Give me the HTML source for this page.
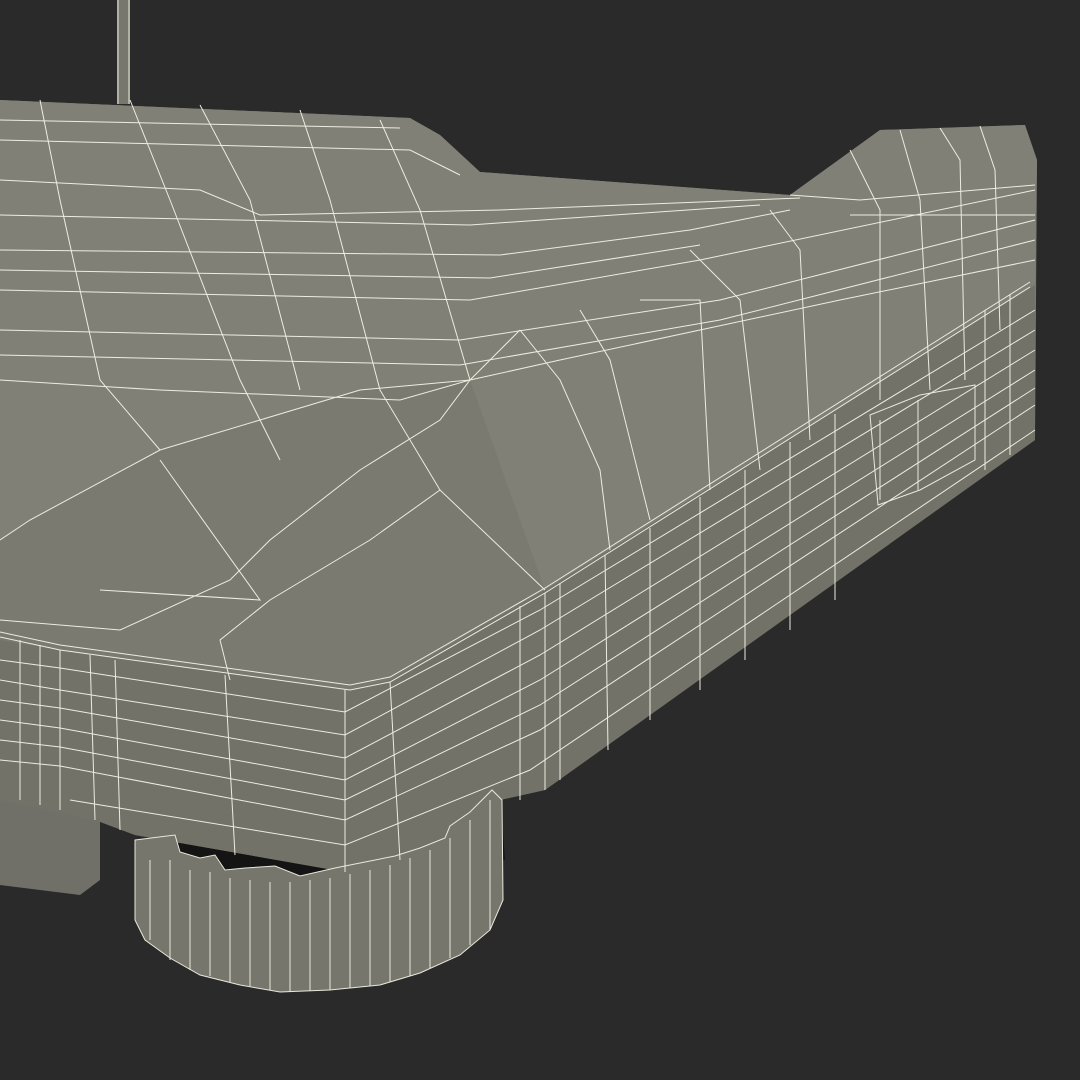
<!DOCTYPE html>
<html><head><meta charset="utf-8"><style>html,body{margin:0;padding:0;background:#2a2a2a;}svg{display:block}</style></head>
<body>
<svg width="1080" height="1080" viewBox="0 0 1080 1080" xmlns="http://www.w3.org/2000/svg">
<rect width="1080" height="1080" fill="#2a2a2a"/>
<rect x="117" y="0" width="13" height="104" fill="#77776d"/>
<line x1="118" y1="0" x2="118" y2="104" stroke="#e8e8dc" stroke-width="1"/>
<line x1="129" y1="0" x2="129" y2="104" stroke="#e8e8dc" stroke-width="1"/>
<polygon points="0,780 100,800 100,880 80,895 0,885" fill="#707068"/>
<polygon points="140,840 500,790 505,860 330,880 150,870" fill="#141414"/>
<polygon points="0,100 410,118 440,135 480,172 790,195 880,130 1025,125 1037,160 1035,440 545,790 500,800 420,855 345,872 135,835 95,820 0,800" fill="#7a7a70"/>
<polygon points="0,100 410,118 440,135 480,172 790,195 880,130 1025,125 1037,160 1035,285 545,590 470,380 360,390 160,450 30,520 0,540" fill="#808076"/>
<polygon points="0,640 60,650 350,690 390,680 545,590 1035,285 1035,440 545,790 500,800 420,855 345,872 135,835 95,820 0,800" fill="#727269"/>
<polygon points="135,840 175,835 180,852 200,858 215,855 225,870 245,868 275,866 300,876 335,868 360,863 395,856 420,848 445,838 450,826 470,812 482,800 492,790 502,800 503,900 490,930 460,955 420,973 380,985 330,990 280,992 240,985 200,975 170,958 145,940 135,920" fill="#76766d" stroke="#e8e8dc" stroke-width="1"/>
<g stroke="#e8e8dc" stroke-width="1" fill="none">
<path d="M150,860 L150,940 M170,860 L170,960 M190,870 L190,970 M210,872 L210,976 M230,878 L230,982 M250,880 L250,986 M270,882 L270,990 M290,882 L290,992 M310,880 L310,991 M330,878 L330,990 M350,874 L350,988 M370,870 L370,986 M390,865 L390,982 M410,858 L410,976 M430,850 L430,968 M450,838 L450,958 M470,820 L470,945 M490,800 L490,930"/>
</g>
<polygon points="870,415 920,395 975,385 975,460 920,490 878,505" fill="#727269" stroke="#e8e8dc" stroke-width="1"/>
<line x1="918" y1="400" x2="918" y2="490" stroke="#e8e8dc"/>
<line x1="880" y1="420" x2="880" y2="500" stroke="#e8e8dc"/>
<g stroke="#ecece0" stroke-width="1" fill="none">
<path d="M0,632 L60,645 L350,685 L390,677 L545,588 L1030,282"/>
<path d="M0,637 L60,650 L350,690 L390,682 L545,593 L1030,287"/>
<path d="M0,660 L60,668 L345,712 L540,610 L1035,310"/>
<path d="M0,680 L60,690 L345,735 L540,630 L1035,330"/>
<path d="M0,700 L60,708 L345,758 L540,655 L1035,350"/>
<path d="M0,720 L60,728 L345,780 L540,680 L1035,370"/>
<path d="M0,740 L60,747 L345,800 L540,705 L1035,388"/>
<path d="M0,760 L60,766 L345,820 L540,730 L1035,405"/>
<path d="M70,800 L345,845 L530,770 L1035,430"/>
<path d="M20,640 L20,800 M40,645 L40,805 M60,650 L60,810 M90,655 L95,820 M115,660 L120,830 M225,675 L235,855 M345,690 L345,872 M390,682 L400,860 M545,593 L545,790 M520,606 L520,800 M560,583 L560,780 M605,555 L608,750 M650,528 L650,720 M700,497 L700,690 M745,470 L745,660 M790,442 L790,630 M835,414 L835,600 M985,310 L985,470 M1010,295 L1010,455"/>
<path d="M0,380 L160,390 L400,400 L470,380 L560,360 L840,300 L1035,260"/>
<path d="M0,355 L460,365 L720,320 L1035,240"/>
<path d="M0,330 L460,340 L720,300 L1035,220"/>
<path d="M0,290 L470,300 L700,260 L1035,190"/>
<path d="M0,270 L490,278 L700,245"/>
<path d="M0,250 L500,255 L690,230 L790,210"/>
<path d="M0,215 L470,225 L760,205"/>
<path d="M0,180 L200,190 L260,215 L500,210 L800,198"/>
<path d="M0,140 L410,150 L460,175"/>
<path d="M0,120 L400,128"/>
<path d="M0,540 L30,520 L160,450 L360,390 L470,380 L520,330"/>
<path d="M0,620 L120,630 L230,580 L270,540 L360,470 L440,420 L470,380"/>
<path d="M230,680 L220,640 L270,600 L370,540 L440,490 L545,590"/>
<path d="M100,590 L260,600 L160,460"/>
<path d="M40,100 L60,200 L100,380 L160,450"/>
<path d="M130,100 L170,200 L240,380 L280,460"/>
<path d="M300,110 L330,200 L380,390 L440,490"/>
<path d="M200,105 L250,200 L300,390"/>
<path d="M380,120 L420,210 L470,380"/>
<path d="M520,330 L560,380 L600,470 L610,550"/>
<path d="M580,310 L610,360 L650,520"/>
<path d="M640,300 L700,300 L710,490"/>
<path d="M690,250 L740,300 L760,470"/>
<path d="M770,210 L800,250 L810,440"/>
<path d="M850,150 L880,210 L880,400"/>
<path d="M900,130 L920,200 L930,390"/>
<path d="M940,128 L960,160 L965,380"/>
<path d="M980,126 L995,170 L1000,330"/>
<path d="M790,195 L860,200 L1035,185"/>
<path d="M850,215 L1035,215"/>
</g>
</svg>
</body></html>
